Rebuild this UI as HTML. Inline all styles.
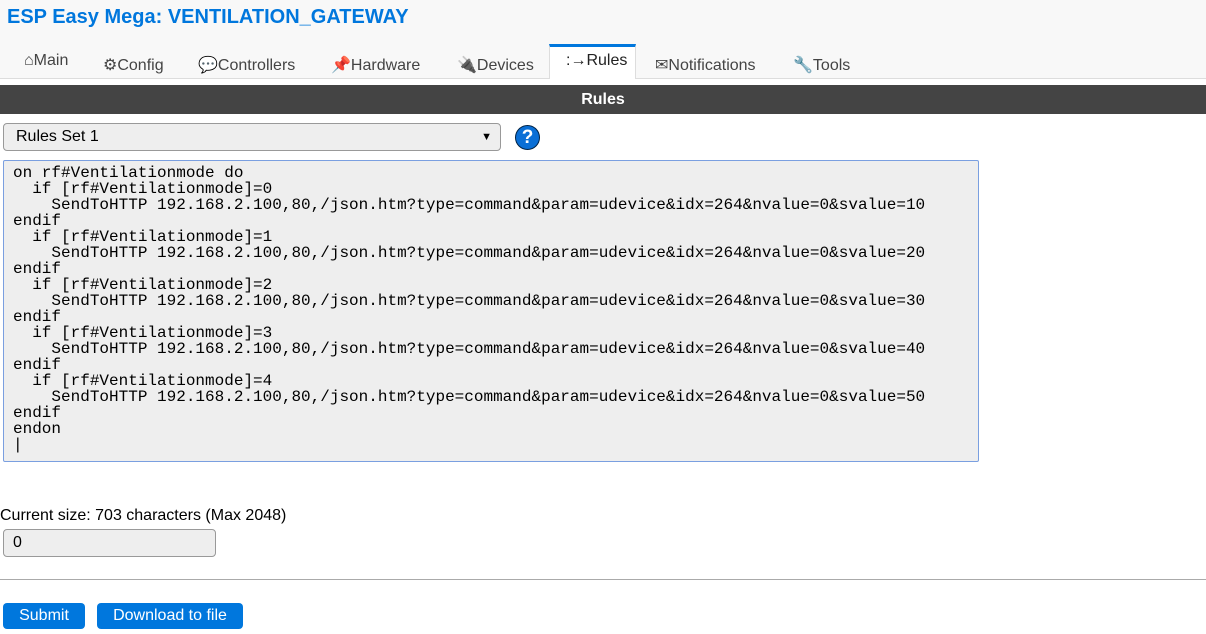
<!DOCTYPE html>
<html><head><style>
body{margin:0;width:1206px;height:634px;background:#fff;font-family:"Liberation Sans",sans-serif;position:relative;overflow:hidden;color:#000}
.hdr{position:absolute;left:0;top:0;width:1206px;height:78px;background:#f8f8f8;border-bottom:1px solid #ddd}
h1{position:absolute;left:7px;top:6px;margin:0;font-size:20px;font-weight:bold;color:#07d}
.tab{position:absolute;top:52px;font-size:16px;color:#444}
.act{position:absolute;left:549px;top:44px;width:87px;height:35px;background:#fff;border-top:3px solid #07d;box-sizing:border-box;border-left:1px solid #ddd;border-right:1px solid #ddd}
.bar{position:absolute;left:0;top:85px;width:1206px;height:29px;background:#444;color:#fff;font-weight:bold;font-size:16px;text-align:center;line-height:29px;text-indent:0}
.sel{position:absolute;left:3px;top:123px;width:498px;height:28px;border:1px solid #999;border-radius:4px;background:#eee;box-sizing:border-box;font-size:16px;line-height:26px;padding-left:12px}
.help{position:absolute;left:515px;top:125px;width:25px;height:25px;border-radius:50%;background:#0a6fd6;border:1px solid #024;box-sizing:border-box;color:#fff;font-weight:bold;font-size:19px;text-align:center;line-height:23px}
.ta{position:absolute;left:3px;top:160px;width:976px;height:302px;border:1px solid #7a9fe0;border-radius:2px;background:#eee;box-sizing:border-box}
pre{margin:0;position:absolute;left:9px;top:4px;font-family:"Liberation Mono",monospace;font-size:16px;line-height:16px;color:#000}
.cur{position:absolute;left:0;top:609px}
.btn{position:absolute;top:603px;height:26px;background:#07d;color:#fff;border-radius:4px;font-size:16px;line-height:26px;text-align:center}
</style></head><body>
<div class="hdr"></div>
<h1>ESP Easy Mega: VENTILATION_GATEWAY</h1>
<div class="act"></div>
<div class="tab" style="left:24px;top:52px">⌂Main</div>
<div class="tab" style="left:103px;top:55px">⚙Config</div>
<div class="tab" style="left:198px;top:55px">💬Controllers</div>
<div class="tab" style="left:331px;top:55px"><span style="color:#d22">📌</span>Hardware</div>
<div class="tab" style="left:457px;top:55px">🔌Devices</div>
<div class="tab" style="left:566px;top:52px;color:#222">:→Rules</div>
<div class="tab" style="left:655px;top:55px">✉Notifications</div>
<div class="tab" style="left:793px;top:55px">🔧Tools</div>
<div class="bar">Rules</div>
<div class="sel">Rules Set 1<span style="position:absolute;right:8px;font-size:11px">▼</span></div>
<div class="help">?</div>
<div class="ta"><pre>on rf#Ventilationmode do
  if [rf#Ventilationmode]=0
    SendToHTTP 192.168.2.100,80,/json.htm?type=command&amp;param=udevice&amp;idx=264&amp;nvalue=0&amp;svalue=10
endif
  if [rf#Ventilationmode]=1
    SendToHTTP 192.168.2.100,80,/json.htm?type=command&amp;param=udevice&amp;idx=264&amp;nvalue=0&amp;svalue=20
endif
  if [rf#Ventilationmode]=2
    SendToHTTP 192.168.2.100,80,/json.htm?type=command&amp;param=udevice&amp;idx=264&amp;nvalue=0&amp;svalue=30
endif
  if [rf#Ventilationmode]=3
    SendToHTTP 192.168.2.100,80,/json.htm?type=command&amp;param=udevice&amp;idx=264&amp;nvalue=0&amp;svalue=40
endif
  if [rf#Ventilationmode]=4
    SendToHTTP 192.168.2.100,80,/json.htm?type=command&amp;param=udevice&amp;idx=264&amp;nvalue=0&amp;svalue=50
endif
endon
|</pre></div>
<div style="position:absolute;left:0;top:507px;font-size:16px">Current size: 703 characters (Max 2048)</div>
<div style="position:absolute;left:3px;top:529px;width:213px;height:28px;border:1px solid #999;border-radius:4px;background:#eee;box-sizing:border-box;font-size:16px;line-height:26px;padding-left:9px">0</div>
<div style="position:absolute;left:0;top:579px;width:1206px;height:1px;background:#aaa"></div>
<div class="btn" style="left:3px;width:82px">Submit</div>
<div class="btn" style="left:97px;width:146px">Download to file</div>
</body></html>
